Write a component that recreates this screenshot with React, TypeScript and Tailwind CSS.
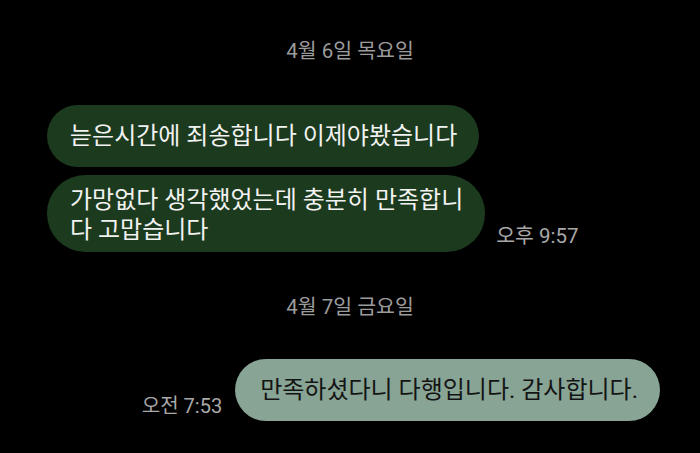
import React from "react";

const font = { fontFamily: "Roboto, 'Noto Sans CJK KR', sans-serif" };

export default function App() {
  return (
    <div className="w-[700px] h-[453px] bg-black overflow-hidden flex flex-col" style={font}>
      <div className="pt-[37px] text-center text-[20.5px] leading-[28px] text-[#9c9c9c]">4월 6일 목요일</div>

      <div className="mt-[40px] pl-[47px] flex">
        <div className="bg-[#1c3a1d] text-[#f2f2f2] rounded-full pl-[23px] pr-[22px] py-[16px] text-[24px] leading-[30px]">
          늗은시간에 죄송합니다 이제야봤습니다
        </div>
      </div>

      <div className="mt-[8px] pl-[47px] flex items-end">
        <div className="bg-[#1c3a1d] text-[#f2f2f2] rounded-[38px] pl-[23px] pr-[22px] pt-[10px] pb-[7px] text-[24px] leading-[30px]">
          가망없다 생각했었는데 충분히 만족합니
          <br />
          다 고맙습니다
        </div>
        <div className="ml-[11px] mb-[3px] text-[20.5px] leading-[26px] text-[#a8a8a8]">오후 9:57</div>
      </div>

      <div className="mt-[41px] text-center text-[20.5px] leading-[28px] text-[#9c9c9c]">4월 7일 금요일</div>

      <div className="mt-[38px] pr-[40px] flex justify-end items-end">
        <div className="mr-[13px] mb-[2px] text-[20px] leading-[26px] text-[#a8a8a8]">오전 7:53</div>
        <div className="bg-[#88a495] text-[#141414] rounded-full pl-[25px] pr-[22px] py-[16px] text-[24px] leading-[30px]">
          만족하셨다니 다행입니다. 감사합니다.
        </div>
      </div>
    </div>
  );
}
